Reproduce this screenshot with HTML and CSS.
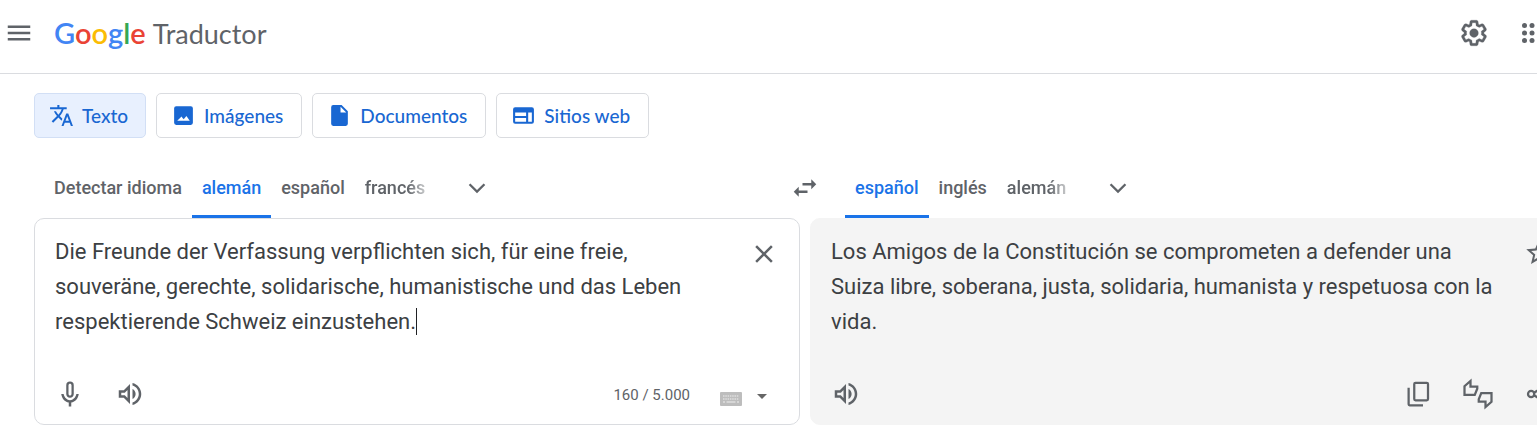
FILE: index.html
```html
<!DOCTYPE html>
<html lang="es">
<head>
    <meta charset="UTF-8">
    <meta name="viewport" content="width=device-width, initial-scale=1.0">
    <title>Google Traductor</title>
    <link rel="stylesheet" href="styles.css">
</head>
<body>

    <header class="top-bar">
        <button class="icon-button" aria-label="Menú principal">
            <svg class="icon" viewBox="0 0 24 24"><path d="M3 18h18v-2H3v2zm0-5h18v-2H3v2zm0-7v2h18V6H3z"/></svg>
        </button>
        <a class="logo" href="#" aria-label="Google Traductor">
            <span class="logo-google"><span class="blue">G</span><span class="red">o</span><span class="yellow">o</span><span class="blue">g</span><span class="green">l</span><span class="red">e</span></span>
            <span class="logo-product">Traductor</span>
        </a>
        <div class="top-actions">
            <button class="icon-button" aria-label="Configuración">
                <svg class="icon gear" viewBox="0 0 24 24">
                    <path d="M13.85 22.25h-3.7c-.74 0-1.36-.54-1.45-1.27l-.27-1.89c-.27-.14-.53-.29-.79-.46l-1.8.72c-.7.26-1.47-.03-1.81-.65L2.2 15.53c-.35-.66-.2-1.44.36-1.88l1.53-1.19c-.01-.15-.02-.3-.02-.46 0-.15.01-.31.02-.46l-1.52-1.19c-.59-.45-.74-1.26-.37-1.88l1.85-3.19c.34-.62 1.11-.9 1.79-.63l1.81.73c.26-.17.52-.32.78-.46l.27-1.91c.09-.7.71-1.25 1.44-1.25h3.7c.74 0 1.36.54 1.45 1.27l.27 1.89c.27.14.53.29.79.46l1.8-.72c.71-.26 1.48.03 1.82.65l1.84 3.18c.36.66.2 1.44-.36 1.88l-1.52 1.19c.01.15.02.3.02.46s-.01.31-.02.46l1.52 1.19c.56.45.72 1.23.37 1.86l-1.86 3.22c-.34.62-1.11.9-1.8.63l-1.8-.72c-.26.17-.52.32-.78.46l-.27 1.91c-.1.68-.72 1.22-1.46 1.22zm-3.23-2h2.76l.37-2.55.53-.22c.44-.18.88-.44 1.34-.78l.45-.34 2.38.96 1.38-2.4-2.03-1.58.07-.56c.03-.26.06-.51.06-.78s-.03-.53-.06-.78l-.07-.56 2.03-1.58-1.39-2.4-2.39.96-.45-.35c-.42-.32-.87-.58-1.33-.77l-.52-.22-.37-2.55h-2.76l-.37 2.55-.53.21c-.44.19-.88.44-1.34.79l-.45.33-2.38-.95-1.39 2.39 2.03 1.58-.07.56a7 7 0 0 0-.06.79c0 .26.02.53.06.78l.07.56-2.03 1.58 1.38 2.4 2.39-.96.45.35c.43.33.86.58 1.33.77l.53.22.38 2.55z"/>
                    <circle cx="12" cy="12" r="3.5"/>
                </svg>
            </button>
            <button class="icon-button" aria-label="Aplicaciones de Google">
                <svg class="icon" viewBox="0 0 24 24">
                    <circle cx="6" cy="6" r="2"/><circle cx="12" cy="6" r="2"/><circle cx="18" cy="6" r="2"/>
                    <circle cx="6" cy="12" r="2"/><circle cx="12" cy="12" r="2"/><circle cx="18" cy="12" r="2"/>
                    <circle cx="6" cy="18" r="2"/><circle cx="12" cy="18" r="2"/><circle cx="18" cy="18" r="2"/>
                </svg>
            </button>
        </div>
    </header>

    <main class="content">

        <!-- Tipo de traducción -->
        <nav class="modes">
            <button class="mode selected">
                <svg class="mode-icon" viewBox="0 0 24 24"><path d="M12.87 15.07l-2.54-2.51.03-.03c1.74-1.94 2.98-4.17 3.71-6.53H17V4h-7V2H8v2H1v1.99h11.17C11.5 7.92 10.44 9.75 9 11.35 8.07 10.32 7.3 9.19 6.69 8h-2c.73 1.63 1.73 3.17 2.98 4.56l-5.09 5.02L4 19l5-5 3.11 3.11.76-2.04zM18.5 10h-2L12 22h2l1.12-3h4.75L21 22h2l-4.5-12zm-2.62 7l1.62-4.33L19.12 17h-3.24z"/></svg>
                Texto
            </button>
            <button class="mode">
                <svg class="mode-icon" viewBox="0 0 24 24"><path fill-rule="evenodd" d="M5 3h14a2 2 0 0 1 2 2v14a2 2 0 0 1-2 2H5a2 2 0 0 1-2-2V5a2 2 0 0 1 2-2zm1 14h12l-3.2-4.6-2.6 3.2-1.1-1.3-1-1.4z"/></svg>
                Imágenes
            </button>
            <button class="mode">
                <svg class="mode-icon" viewBox="0 0 24 24"><path fill-rule="evenodd" d="M6 2h8l6 6v12a2 2 0 0 1-2 2H6a2 2 0 0 1-2-2V4a2 2 0 0 1 2-2zm7 1.500V9h5.500z"/></svg>
                Documentos
            </button>
            <button class="mode">
                <svg class="mode-icon" viewBox="0 0 24 24"><path fill-rule="evenodd" d="M4 4h16a2 2 0 0 1 2 2v12a2 2 0 0 1-2 2H4a2 2 0 0 1-2-2V6a2 2 0 0 1 2-2zm0 5v3.500h10.500V9zm0 5.500V18h10.500v-3.500zM16.500 9v9H20V9z"/></svg>
                Sitios web
            </button>
        </nav>

        <!-- Idiomas -->
        <div class="languages">
            <div class="language-list">
                <button class="language">Detectar idioma</button>
                <button class="language active">alemán</button>
                <button class="language">español</button>
                <button class="language faded">francés</button>
                <button class="icon-button more" aria-label="Más idiomas de origen">
                    <svg class="icon" viewBox="0 0 24 24"><path d="M6.700 8.300L5.400 9.600l6.600 6.600 6.600-6.600-1.300-1.300-5.300 5.300z"/></svg>
                </button>
            </div>
            <button class="swap" aria-label="Intercambiar idiomas">
                <svg class="icon" viewBox="0 0 24 24"><path d="M6.990 11L3 15l3.990 4v-3H14v-2H6.990v-3zM21 9l-3.990-4v3H10v2h7.010v3L21 9z"/></svg>
            </button>
            <div class="language-list">
                <button class="language active">español</button>
                <button class="language">inglés</button>
                <button class="language faded">alemán</button>
                <button class="icon-button more" aria-label="Más idiomas de destino">
                    <svg class="icon" viewBox="0 0 24 24"><path d="M6.700 8.300L5.400 9.600l6.600 6.600 6.600-6.600-1.300-1.300-5.300 5.300z"/></svg>
                </button>
            </div>
        </div>

        <!-- Paneles de texto -->
        <div class="panels">
            <section class="panel source">
                <div class="panel-text">
                    <textarea class="source-text" aria-label="Texto de origen" spellcheck="false">Die Freunde der Verfassung verpflichten sich, für eine freie, souveräne, gerechte, solidarische, humanistische und das Leben respektierende Schweiz einzustehen.</textarea>
                    <span class="caret"></span>
                    <button class="icon-button" aria-label="Borrar texto">
                        <svg class="icon" viewBox="0 0 24 24"><path d="M19 6.410L17.590 5 12 10.590 6.410 5 5 6.410 10.590 12 5 17.590 6.410 19 12 13.410 17.590 19 19 17.590 13.410 12z"/></svg>
                    </button>
                </div>
                <div class="panel-footer">
                    <button class="tool" aria-label="Traducir por voz">
                        <svg class="icon" viewBox="0 0 24 24"><path d="M12 15c1.660 0 3-1.310 3-2.970v-7.020a3 3 0 0 0-6 0v7.020C9 13.690 10.340 15 12 15zm-1.200-10c0-.66.54-1.200 1.200-1.200s1.200.54 1.200 1.200v7c0 .66-.54 1.200-1.200 1.200s-1.200-.54-1.200-1.200V5zm6.280 7c-.42 2.600-2.650 4.980-5.080 4.980S7.340 14.600 6.920 12H5c.4 3.500 2.800 6.300 6 6.800V22h2v-3.200c3.200-.5 5.600-3.300 6-6.800h-1.920z"/></svg>
                    </button>
                    <button class="tool" aria-label="Escuchar texto de origen">
                        <svg class="icon" viewBox="0 0 24 24"><path d="M3 9v6h4l5 5V4L7 9H3zm7-.17v6.340L7.830 13H5v-2h2.830L10 8.830zM16.500 12c0-1.770-1.020-3.290-2.500-4.030v8.050c1.480-.73 2.500-2.250 2.500-4.020zM14 3.230v2.060c2.890.86 5 3.540 5 6.710s-2.110 5.850-5 6.710v2.060c4.010-.91 7-4.490 7-8.770 0-4.280-2.990-7.860-7-8.770z"/></svg>
                    </button>
                    <span class="counter">160 / 5.000</span>
                    <button class="keyboard" aria-label="Herramientas de introducción de texto">
                        <svg width="22" height="14" viewBox="0 0 22 14">
                            <rect width="22" height="14" rx="1" fill="#bdbdbd"/>
                            <path d="M3 4h16M3 7h16" stroke="#d6d6d6" stroke-width="2" stroke-dasharray="1.500 .8"/>
                            <path d="M3 10h2M6.500 10h9M17 10h2" stroke="#d6d6d6" stroke-width="2"/>
                        </svg>
                    </button>
                    <button class="keyboard-menu" aria-label="Mostrar herramientas">
                        <svg width="10" height="5" viewBox="0 0 10 5"><path d="M0 0h10L5 5z" fill="#666"/></svg>
                    </button>
                </div>
            </section>

            <section class="panel result">
                <div class="panel-text">
                    <p class="result-text">Los Amigos de la Constitución se comprometen a defender una Suiza libre, soberana, justa, solidaria, humanista y respetuosa con la vida.</p>
                    <button class="icon-button" aria-label="Guardar traducción">
                        <svg class="icon" viewBox="0 0 24 24"><path transform="translate(-1 -1)" d="M22 9.240l-7.190-.62L12 2 9.190 8.630 2 9.240l5.460 4.730L5.820 21 12 17.270 18.180 21l-1.630-7.030L22 9.240zM12 15.400l-3.760 2.270 1-4.280-3.320-2.880 4.380-.38L12 6.100l1.710 4.040 4.380.38-3.320 2.880 1 4.280L12 15.400z"/></svg>
                    </button>
                </div>
                <div class="panel-footer">
                    <button class="tool" aria-label="Escuchar traducción">
                        <svg class="icon" viewBox="0 0 24 24"><path d="M3 9v6h4l5 5V4L7 9H3zm7-.17v6.340L7.830 13H5v-2h2.830L10 8.830zM16.500 12c0-1.770-1.020-3.290-2.500-4.030v8.050c1.480-.73 2.500-2.250 2.500-4.020zM14 3.230v2.060c2.890.86 5 3.540 5 6.710s-2.110 5.850-5 6.710v2.060c4.010-.91 7-4.490 7-8.770 0-4.280-2.990-7.860-7-8.770z"/></svg>
                    </button>
                    <div class="result-tools">
                        <button class="tool" aria-label="Copiar traducción">
                            <svg class="icon line" viewBox="0 0 24 24"><rect x="9" y="3" width="11" height="14" rx="1"/><path d="M4.500 7v13.200a.8.8 0 0 0 .8.8H16"/></svg>
                        </button>
                        <button class="tool" aria-label="Valorar traducción">
                            <svg class="icon line" viewBox="0 0 24 24"><path d="M1.200 12.700V5.800L6 1.600V6h5.400v1.800L9.400 12.700z"/><path d="M22.800 11.300v6.900L18 22.400V18h-5.400v-1.800l2-4.900z"/></svg>
                        </button>
                        <button class="tool" aria-label="Compartir traducción">
                            <svg class="icon line" viewBox="0 0 24 24"><circle cx="6.500" cy="12" r="2.500"/><circle cx="18" cy="5" r="2.500"/><circle cx="18" cy="19" r="2.500"/><path d="M8.800 11l6.900-4.500M8.800 13l6.900 4.500"/></svg>
                        </button>
                    </div>
                </div>
            </section>
        </div>

    </main>

</body>
</html>
```
FILE: styles.css
```css
* {
    box-sizing: border-box;
}

body {
    margin: 0;
    background: #fff;
    color: #3c4043;
    font-family: Roboto, "Liberation Sans", sans-serif;
    overflow: hidden;
}

button {
    background: none;
    border: none;
    padding: 0;
    color: #5f6368;
    font-family: inherit;
    cursor: pointer;
}

svg {
    display: block;
}

.icon {
    width: 30px;
    height: 30px;
    fill: #5f6368;
}

.icon.line {
    fill: none;
    stroke: #5f6368;
    stroke-width: 1.8;
    overflow: visible;
}

.icon.gear {
    stroke: #5f6368;
    stroke-width: 0.2;
}

.icon-button {
    flex: none;
    width: 30px;
    height: 30px;
}

/* Barra superior */
.top-bar {
    display: flex;
    align-items: center;
    width: calc(100% + 10px);
    height: 74px;
    padding: 0 0 8px 4px;
    border-bottom: 1px solid #dadce0;
}

.logo {
    display: flex;
    align-items: baseline;
    gap: 7px;
    margin-left: 20px;
    color: #5f6368;
    text-decoration: none;
}

.logo-google {
    font-family: Lato, sans-serif;
    font-size: 29px;
    font-weight: 600;
}

.logo-product {
    font-family: Lato, sans-serif;
    font-size: 27px;
}

.blue { color: #4285f4; }
.red { color: #ea4335; }
.yellow { color: #fbbc04; }
.green { color: #34a853; }

.top-actions {
    display: flex;
    gap: 28px;
    margin-left: auto;
}

/* Contenido: sobresale por la derecha de la ventana */
.content {
    width: calc(100% + 39px);
    padding: 19px 0 0 34px;
}

.modes {
    display: flex;
    gap: 10px;
}

.mode {
    display: flex;
    align-items: center;
    gap: 8px;
    height: 45px;
    padding: 0 18px 0 14px;
    border: 1px solid #dadce0;
    border-radius: 5px;
    color: #1967d2;
    font-family: Lato, sans-serif;
    font-size: 19px;
    font-weight: 500;
}

.mode.selected {
    padding-right: 17px;
    background: #e8f0fe;
    border-color: #d2dff5;
}

.mode-icon {
    width: 25px;
    height: 25px;
    fill: #1967d2;
}

/* Idiomas */
.languages {
    display: flex;
    height: 60px;
    margin-top: 20px;
}

.language-list {
    display: flex;
    flex: 1;
    align-items: center;
    padding-left: 10px;
}

.language {
    height: 60px;
    padding: 1px 10px 0;
    border-bottom: 3px solid transparent;
    font-size: 18px;
    font-weight: 500;
}

.language.active {
    color: #1a73e8;
    border-bottom-color: #1a73e8;
}

.language.faded {
    -webkit-mask-image: linear-gradient(to right, #000 65%, transparent);
    mask-image: linear-gradient(to right, #000 65%, transparent);
}

.more {
    margin-left: 27px;
}

.swap {
    display: flex;
    align-items: center;
    justify-content: center;
    width: 60px;
}

/* Paneles */
.panels {
    display: grid;
    grid-template-columns: 1fr 1fr;
    gap: 10px;
}

.panel {
    border: 1px solid #dadce0;
    border-radius: 10px;
}

.result {
    background: #f4f4f4;
    border-color: #f4f4f4;
}

.panel-text {
    display: flex;
    position: relative;
    min-height: 145px;
    padding: 15px 20px 0;
    font-size: 22px;
    line-height: 35px;
}

.panel-text .icon-button {
    margin: 5px 0 0 20px;
}

.source-text {
    flex: 1;
    min-width: 0;
    padding: 0;
    border: none;
    outline: none;
    resize: none;
    background: none;
    color: inherit;
    font: inherit;
    overflow: hidden;
}

.caret {
    position: absolute;
    left: 381px;
    top: 89px;
    width: 1px;
    height: 27px;
    background: #202124;
}

.result-text {
    flex: 1;
    margin: 0;
}

.panel-footer {
    display: flex;
    align-items: center;
    height: 60px;
    padding: 0 5px;
}

.tool {
    display: flex;
    align-items: center;
    justify-content: center;
    width: 60px;
    height: 60px;
}

.counter {
    margin-left: auto;
    padding-top: 2px;
    color: #5f6368;
    font-size: 15px;
}

.keyboard {
    margin: 10px 15px 0 30px;
}

.keyboard-menu {
    margin: 5px 27px 0 0;
}

.result-tools {
    display: flex;
    margin-left: auto;
    margin-right: 2px;
}
```
